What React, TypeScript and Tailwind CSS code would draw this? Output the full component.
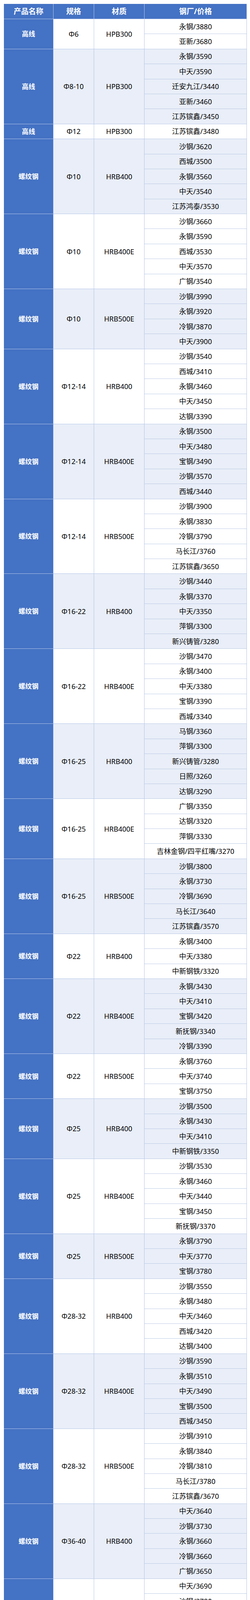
import React from 'react';

type Group = [string, string, string, string[]];

// 产品 / 规格 / 材质 / 钢厂价格
const groups: Group[] = [
  ['高线', 'Φ6', 'HPB300', ['永钢/3880', '亚新/3680']],
  ['高线', 'Φ8-10', 'HPB300', ['永钢/3590', '中天/3590', '迁安九江/3440', '亚新/3460', '江苏镔鑫/3450']],
  ['高线', 'Φ12', 'HPB300', ['江苏镔鑫/3480']],
  ['螺纹钢', 'Φ10', 'HRB400', ['沙钢/3620', '西城/3500', '永钢/3560', '中天/3540', '江苏鸿泰/3530']],
  ['螺纹钢', 'Φ10', 'HRB400E', ['沙钢/3660', '永钢/3590', '西城/3530', '中天/3570', '广钢/3540']],
  ['螺纹钢', 'Φ10', 'HRB500E', ['沙钢/3990', '永钢/3920', '冷钢/3870', '中天/3900']],
  ['螺纹钢', 'Φ12-14', 'HRB400', ['沙钢/3540', '西城/3410', '永钢/3460', '中天/3450', '达钢/3390']],
  ['螺纹钢', 'Φ12-14', 'HRB400E', ['永钢/3500', '中天/3480', '宝钢/3490', '沙钢/3570', '西城/3440']],
  ['螺纹钢', 'Φ12-14', 'HRB500E', ['沙钢/3900', '永钢/3830', '冷钢/3790', '马长江/3760', '江苏镔鑫/3650']],
  ['螺纹钢', 'Φ16-22', 'HRB400', ['沙钢/3440', '永钢/3370', '中天/3350', '萍钢/3300', '新兴铸管/3280']],
  ['螺纹钢', 'Φ16-22', 'HRB400E', ['沙钢/3470', '永钢/3400', '中天/3380', '宝钢/3390', '西城/3340']],
  ['螺纹钢', 'Φ16-25', 'HRB400', ['马钢/3360', '萍钢/3300', '新兴铸管/3280', '日照/3260', '达钢/3290']],
  ['螺纹钢', 'Φ16-25', 'HRB400E', ['广钢/3350', '达钢/3320', '萍钢/3330', '吉林金钢/四平红嘴/3270']],
  ['螺纹钢', 'Φ16-25', 'HRB500E', ['沙钢/3800', '永钢/3730', '冷钢/3690', '马长江/3640', '江苏镔鑫/3570']],
  ['螺纹钢', 'Φ22', 'HRB400', ['永钢/3400', '中天/3380', '中新钢铁/3320']],
  ['螺纹钢', 'Φ22', 'HRB400E', ['永钢/3430', '中天/3410', '宝钢/3420', '新抚钢/3340', '冷钢/3390']],
  ['螺纹钢', 'Φ22', 'HRB500E', ['永钢/3760', '中天/3740', '宝钢/3750']],
  ['螺纹钢', 'Φ25', 'HRB400', ['沙钢/3500', '永钢/3430', '中天/3410', '中新钢铁/3350']],
  ['螺纹钢', 'Φ25', 'HRB400E', ['沙钢/3530', '永钢/3460', '中天/3440', '宝钢/3450', '新抚钢/3370']],
  ['螺纹钢', 'Φ25', 'HRB500E', ['永钢/3790', '中天/3770', '宝钢/3780']],
  ['螺纹钢', 'Φ28-32', 'HRB400', ['沙钢/3550', '永钢/3480', '中天/3460', '西城/3420', '达钢/3400']],
  ['螺纹钢', 'Φ28-32', 'HRB400E', ['沙钢/3590', '永钢/3510', '中天/3490', '宝钢/3500', '西城/3450']],
  ['螺纹钢', 'Φ28-32', 'HRB500E', ['沙钢/3910', '永钢/3840', '冷钢/3810', '马长江/3780', '江苏镔鑫/3670']],
  ['螺纹钢', 'Φ36-40', 'HRB400', ['中天/3640', '沙钢/3730', '永钢/3660', '冷钢/3660', '广钢/3650']],
  ['螺纹钢', 'Φ36-40', 'HRB400E', ['中天/3690', '沙钢/3780', '冷钢/3660', '广钢/3650', '永钢/3700']],
  ['螺纹钢', 'Φ36-40', 'HRB500E', ['沙钢/4090', '永钢/4020', '冷钢/3980', '马长江/3980', '中天/4000']],
  ['盘螺', 'Φ6', 'HRB400', ['沙钢/3870', '永钢/3870', '萍钢/3880', '中天/3880', '中新钢铁/3810']],
  ['盘螺', 'Φ6', 'HRB400E', ['沙钢/3920', '永钢/3920', '中天/3920', '萍钢/3940', '马长江/3950']],
  ['盘螺', 'Φ8-10', 'HRB400', ['沙钢/3590', '永钢/3590', '中天/3590', '日照/3350', '西城/3540']],
  ['盘螺', 'Φ8-10', 'HRB400E', ['沙钢/3620', '永钢/3620', '中天/3620', '广钢/3550', '萍钢/3560']],
  ['盘螺', 'Φ8-10', 'HRB500E', ['永钢/3950']],
  ['盘螺', 'Φ12', 'HRB400', ['中天/3640']],
  ['盘螺', 'Φ12', 'HRB400E', ['中天/3670', '江苏镔鑫/3560', '浙江万泰/3560']],
  ['圆钢', 'Φ10-12', 'HPB300', ['永钢/3850', '富钢/3760']],
  ['圆钢', 'Φ14-22', 'HPB300', ['永钢/3740', '富钢/3690']],
  ['圆钢', 'Φ16-25', 'Q235B', ['沙钢/3770', '鄂钢/3750']],
  ['圆钢', 'Φ28-32', 'Q235B', ['沙钢/3780', '鄂钢/3750']],
];

const PriceTable: React.FC = () => {
  return (
    <div className="w-[622px] border-r border-[#b4c6e7]">
      {/* Header */}
      <div className="flex h-[39px] bg-[#4472c4] text-white font-bold text-[19px] leading-none border-b border-[#b4c6e7]">
        <div className="w-[127px] shrink-0 flex items-center justify-center border-r border-[#b4c6e7]">产品名称</div>
        <div className="w-[104px] shrink-0 flex items-center justify-center border-r border-[#b4c6e7]">规格</div>
        <div className="w-[129px] shrink-0 flex items-center justify-center border-r border-[#b4c6e7]">材质</div>
        <div className="flex-1 flex items-center justify-center">钢厂/价格</div>
      </div>

      {groups.map(([name, spec, grade, mills], i) => {
        const rowBg = i % 2 === 0 ? 'bg-white' : 'bg-[#e9eef8]';
        return (
          <div key={i} className={`flex items-stretch ${rowBg}`}>
            <div className="w-[127px] shrink-0 flex items-center justify-center bg-[#4472c4] text-white font-bold text-[17px] leading-none border-r border-b border-[#b4c6e7]">
              {name}
            </div>
            <div className="w-[104px] shrink-0 flex items-center justify-center text-[18px] leading-none border-r border-b border-[#b4c6e7]">
              {spec}
            </div>
            <div className="w-[129px] shrink-0 flex items-center justify-center text-[18px] leading-none border-r border-b border-[#b4c6e7]">
              {grade}
            </div>
            <div className="flex-1 flex flex-col">
              {mills.map((m, j) => (
                <div
                  key={j}
                  className="h-[38.4px] shrink-0 flex items-center justify-center text-[18px] leading-none whitespace-nowrap border-b border-[#bccbe6]"
                >
                  {m}
                </div>
              ))}
            </div>
          </div>
        );
      })}
    </div>
  );
};

export default function App() {
  return (
    <div className="bg-white pt-[10px] pb-[10px] pl-[10px] text-black font-['Noto_Sans','Noto_Sans_CJK_SC',sans-serif]">
      <PriceTable />
    </div>
  );
}
